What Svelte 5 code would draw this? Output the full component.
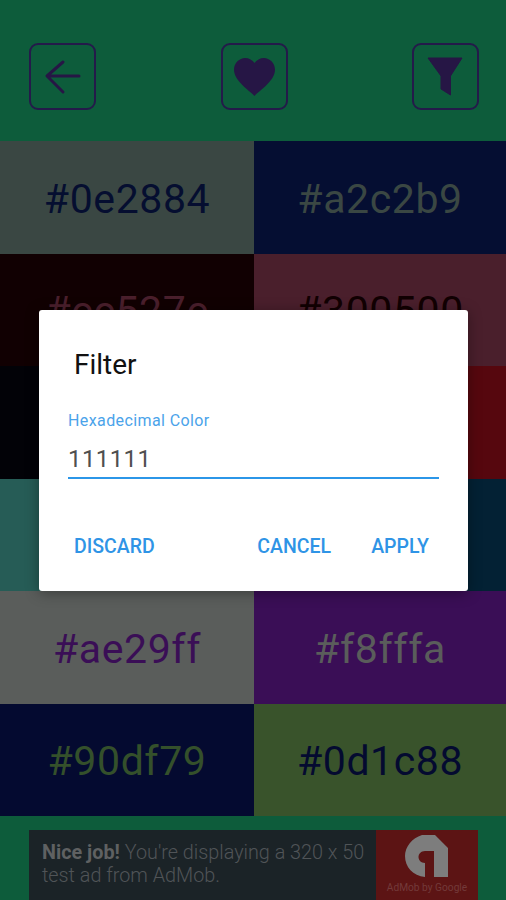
<script>
	const tiles = [
		{ label: '#0e2884', bg: '#3a4743', fg: '#050e30' },
		{ label: '#a2c2b9', bg: '#050e32', fg: '#3a4743' },
		{ label: '#cc527c', bg: '#110002', fg: '#4a1f2c' },
		{ label: '#300500', bg: '#4a1f2c', fg: '#110002' },
		{ label: '#000014', bg: '#020207', fg: '#343434' },
		{ label: '#f81020', bg: '#56070e', fg: '#020207' },
		{ label: '#6ffff0', bg: '#265c56', fg: '#032134' },
		{ label: '#0a6099', bg: '#032134', fg: '#265c56' },
		{ label: '#ae29ff', bg: '#5a5d5b', fg: '#3a0e56' },
		{ label: '#f8fffa', bg: '#3a0e56', fg: '#5a5d5b' },
		{ label: '#90df79', bg: '#040a30', fg: '#34502b' },
		{ label: '#0d1c88', bg: '#39532b', fg: '#040a30' }
	];
</script>

<div class="screen">
	<header class="toolbar">
		<button class="tool" aria-label="Back">
			<svg viewBox="0 0 63 63" width="63" height="63">
				<path d="M48 31H17M32 17L16 31L32 47" fill="none" stroke="#261645" stroke-width="3" stroke-linecap="round" stroke-linejoin="round" />
			</svg>
		</button>
		<button class="tool" aria-label="Favourites">
			<svg viewBox="0 0 63 63" width="63" height="63">
				<path d="M31.500 51C26 45 11 36 11 24.500C11 18 16.500 13 22 13C26 13 29.500 15 31.500 18C33.500 15 37 13 41 13C46.500 13 52 18 52 24.500C52 36 37 45 31.500 51Z" fill="#261645" />
			</svg>
		</button>
		<button class="tool" aria-label="Filter">
			<svg viewBox="0 0 63 63" width="63" height="63">
				<path d="M14 13H48L36.500 31V50L27 44V31Z" fill="#261645" stroke="#261645" stroke-width="1" stroke-linejoin="round" />
			</svg>
		</button>
	</header>

	<main class="grid">
		{#each tiles as tile}
			<div class="tile" style="background: {tile.bg}; color: {tile.fg}">{tile.label}</div>
		{/each}
	</main>

	<footer class="ad-bar">
		<div class="ad">
			<p class="ad-text"><b>Nice job!</b> You're displaying a 320 x 50 test ad from AdMob.</p>
			<div class="ad-logo">
				<svg viewBox="0 0 44 44" width="44" height="44">
					<path d="M17 0H30L43 13V42H29V16H20C16 16 13.500 19 13.500 22C13.500 25 16 28 20 28V42C8 41 0 32 0 21C0 12 7 3 17 0Z" fill="#7d7d7d" />
				</svg>
				<span>AdMob by Google</span>
			</div>
		</div>
	</footer>

	<div class="dialog">
		<h2>Filter</h2>
		<label class="field">
			<span>Hexadecimal Color</span>
			<div class="value">111111</div>
		</label>
		<div class="actions">
			<button>DISCARD</button>
			<div class="actions-right">
				<button>CANCEL</button>
				<button>APPLY</button>
			</div>
		</div>
	</div>
</div>

<style>
	:global(body) {
		margin: 0;
		overflow: hidden;
	}

	.screen {
		position: relative;
		width: 506px;
		height: 900px;
		overflow: hidden;
		background: #0d5c3b;
		font-family: Roboto, sans-serif;
	}

	.toolbar {
		height: 141px;
		box-sizing: border-box;
		padding: 43px 27px 0 29px;
		display: flex;
		justify-content: space-between;
		align-items: flex-start;
	}

	.tool {
		width: 67px;
		height: 67px;
		padding: 0;
		box-sizing: border-box;
		border: 2px solid #241a4a;
		border-radius: 9px;
		background: none;
		display: flex;
		align-items: center;
		justify-content: center;
	}

	.grid {
		display: grid;
		grid-template-columns: 254px 252px;
		grid-auto-rows: 112.5px;
		height: 675px;
	}

	.tile {
		display: flex;
		align-items: center;
		justify-content: center;
		padding-top: 3px;
		box-sizing: border-box;
		font-size: 41px;
		letter-spacing: 0.6px;
	}

	.ad-bar {
		padding: 14px 28px 0 29px;
	}

	.ad {
		display: flex;
		height: 70px;
		background: #1b2327;
	}

	.ad-text {
		flex: 1;
		margin: 0;
		padding: 11px 8px 0 13px;
		font-size: 19.800px;
		font-weight: 300;
		line-height: 23px;
		color: #505457;
	}

	.ad-text b {
		font-weight: 700;
		color: #5f6162;
	}

	.ad-logo {
		width: 102px;
		background: #5c1414;
		display: flex;
		flex-direction: column;
		align-items: center;
		padding-top: 5px;
		box-sizing: border-box;
	}

	.ad-logo span {
		margin-top: 3px;
		font-size: 10.200px;
		color: #733a3a;
		white-space: nowrap;
	}

	.dialog {
		position: absolute;
		left: 39px;
		top: 310px;
		width: 429px;
		height: 281px;
		box-sizing: border-box;
		padding: 39px 29px 0 29px;
		background: #fff;
		border-radius: 3px;
		box-shadow: 0 2px 14px rgba(0, 0, 0, 0.35);
	}

	h2 {
		margin: 0 0 0 6px;
		font-size: 28px;
		line-height: 32px;
		font-weight: 400;
		color: #111;
	}

	.field {
		display: block;
		margin-top: 30px;
		border-bottom: 2px solid #2b96e8;
	}

	.field span {
		display: block;
		font-size: 16px;
		line-height: 20px;
		letter-spacing: 0.4px;
		color: #4ba3ea;
	}

	.value {
		margin-top: 10px;
		font-size: 24px;
		line-height: 36px;
		letter-spacing: 0.4px;
		color: #4f4f4f;
	}

	.actions {
		display: flex;
		justify-content: space-between;
		margin-top: 56px;
		padding: 0 10px 0 6px;
	}

	.actions-right {
		display: flex;
		gap: 40px;
	}

	.actions button {
		padding: 0;
		border: 0;
		background: none;
		font-family: Roboto, sans-serif;
		font-size: 19.500px;
		font-weight: 500;
		line-height: 24px;
		color: #2f94e6;
	}
</style>
